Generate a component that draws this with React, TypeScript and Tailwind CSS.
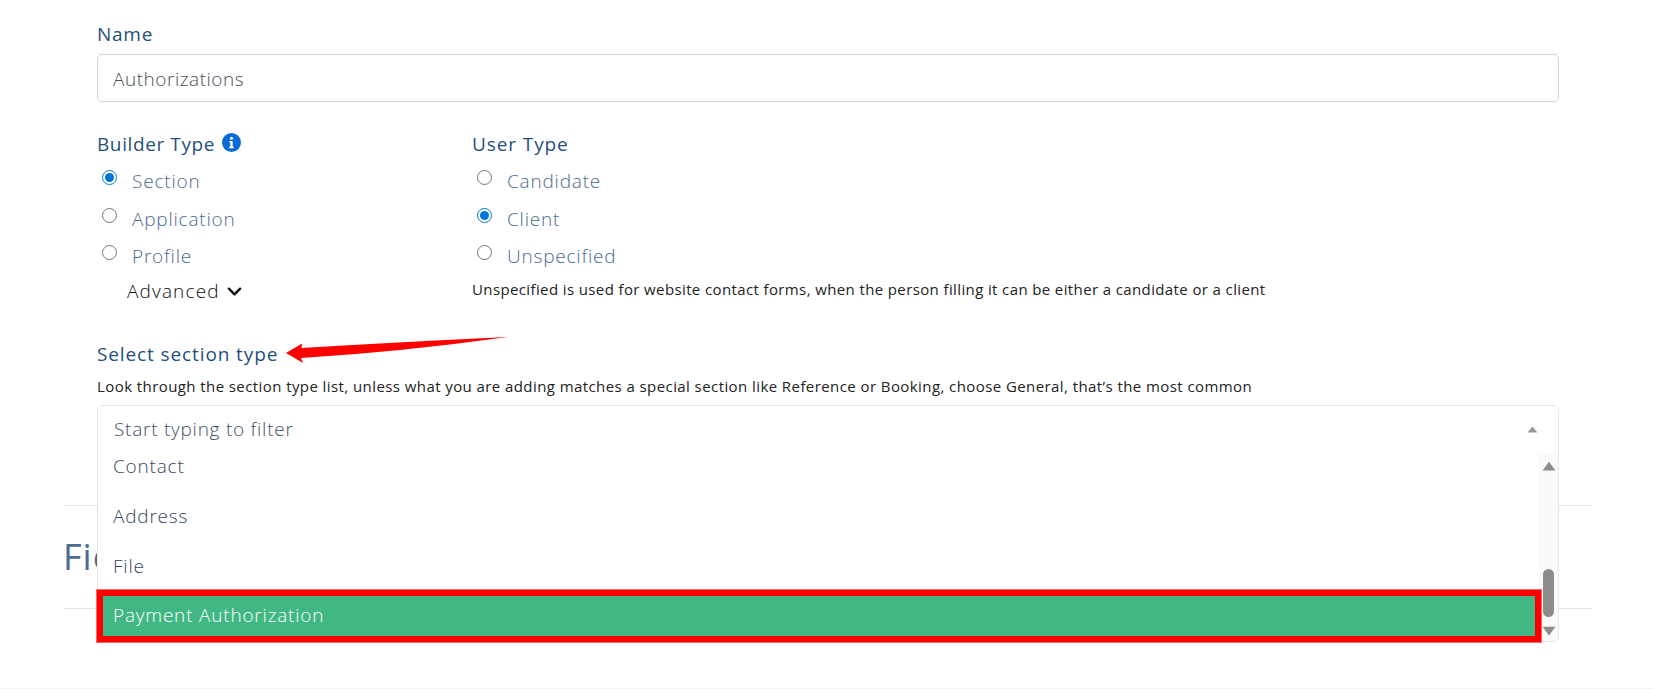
import React from "react";

const font = { fontFamily: '"Open Sans", "Liberation Sans", sans-serif' };

function RadioRow({ label, checked, name }: { label: string; checked?: boolean; name: string }) {
  return (
    <label className="flex h-[37.5px] items-center pl-[5px]">
      <input type="radio" name={name} defaultChecked={checked} className="-mt-[8px] h-[15px] w-[15px] accent-[#0075d9]" />
      <span className="-mt-[1px] ml-[15px] text-[19px] font-light leading-[24px] tracking-[0.8px] text-[#4a6b92]">{label}</span>
    </label>
  );
}

function Tri({ down, cls }: { down?: boolean; cls: string }) {
  return (
    <svg viewBox="0 0 12 8" preserveAspectRatio="none" className={cls}>
      <path d={down ? "M0.5 0.5 H11.5 L6 7.5 Z" : "M6 0.5 L11.5 7.5 H0.5 Z"} fill="currentColor" />
    </svg>
  );
}

export default function App() {
  return (
    <div style={font} className="relative h-[693px] w-full overflow-hidden bg-white pl-[97px] pr-[94px] pt-[22px]">
      <div className="text-[19px] font-medium leading-[24px] tracking-[0.75px] text-[#1f4f7c]">Name</div>
      <div className="mt-[8px] flex h-[48px] items-center rounded-[5px] border border-[#ced4da] px-[15px] pt-[2px] text-[19px] font-light tracking-[0.53px] text-[#4a4f55]">
        Authorizations
      </div>

      <div className="mt-[30px] flex">
        <div className="w-[375px]">
          <div className="flex h-[24px] items-center text-[19px] font-medium leading-[24px] tracking-[0.6px] text-[#1f4f7c]">
            Builder Type
            <svg viewBox="0 0 20 20" className="-mt-[3px] ml-[7px] h-[19px] w-[19px]">
              <circle cx="10" cy="10" r="10" fill="#0b6bd6" />
              <circle cx="10" cy="5.6" r="1.6" fill="#fff" />
              <path d="M7.8 8.4h3.4v6h1.2v1.6H7.6v-1.6h1.2v-4.4H7.8z" fill="#fff" />
            </svg>
          </div>
          <div className="mt-[7px]">
            <RadioRow name="builder" label="Section" checked />
            <RadioRow name="builder" label="Application" />
            <RadioRow name="builder" label="Profile" />
          </div>
          <div className="mt-[4px] flex h-[24px] items-center pl-[30px] text-[19px] font-light tracking-[1.15px] text-[#111]">
            Advanced
            <svg viewBox="0 0 16 16" className="ml-[7px] h-[15px] w-[15px]" fill="none" stroke="#111" strokeWidth="2.6" strokeLinecap="round" strokeLinejoin="round">
              <path d="M2 5 L8 11 L14 5" />
            </svg>
          </div>
        </div>
        <div className="flex-1">
          <div className="text-[19px] font-medium leading-[24px] tracking-[0.9px] text-[#1f4f7c]">User Type</div>
          <div className="mt-[7px]">
            <RadioRow name="user" label="Candidate" />
            <RadioRow name="user" label="Client" checked />
            <RadioRow name="user" label="Unspecified" />
          </div>
          <div className="mt-[4px] -translate-y-[1px] text-[15px] leading-[20px] tracking-[0.38px] text-[#222]">
            Unspecified is used for website contact forms, when the person filling it can be either a candidate or a client
          </div>
        </div>
      </div>

      <div className="mt-[38px] text-[19px] font-medium leading-[24px] tracking-[0.89px] text-[#1f4f7c]">Select section type</div>
      <div className="mt-[11px] -translate-y-[1px] text-[15px] leading-[20px] tracking-[0.42px] text-[#222]">
        Look through the section type list, unless what you are adding matches a special section like Reference or Booking, choose General, that’s the most common
      </div>

      <div className="relative mt-[8px]">
        <div className="flex h-[50px] items-center justify-between rounded-t-[5px] border border-[#e8e8e8] pl-[16px] pr-[20px] text-[19px] font-light tracking-[0.75px] text-[#3f4f66]">
          Start typing to filter
          <Tri cls="h-[7px] w-[11px] text-[#999]" />
        </div>
        <div className="absolute left-0 right-0 top-[49px] z-10 flex h-[188px] overflow-hidden rounded-b-[5px] border border-t-0 border-[#e8e8e8] bg-white">
          <div className="flex-1 overflow-hidden text-[19px] font-light tracking-[0.8px]">
            <div className="-mt-[12px]">
              <div className="flex h-[50px] items-center px-[15px] text-[#35465f]">Contact</div>
              <div className="flex h-[50px] items-center px-[15px] text-[#35465f]">Address</div>
              <div className="flex h-[49px] items-center px-[15px] text-[#35465f]">File</div>
              <div className="flex h-[50px] items-center bg-[#41b883] px-[15px] text-white">Payment Authorization</div>
            </div>
          </div>
          <div className="relative w-[19px] shrink-0 bg-[#fafafa] text-[#8c8c8c]">
            <Tri cls="absolute left-[3px] top-[7px] h-[10px] w-[14px]" />
            <div className="absolute left-[4px] top-[115px] h-[48px] w-[11px] rounded-full bg-[#8c8c8c]" />
            <Tri down cls="absolute bottom-[5px] left-[3px] h-[10px] w-[14px]" />
          </div>
        </div>
        <div className="absolute left-0 top-[185px] z-20 h-[52px] w-[1444px] border-[6px] border-[#ff0000] shadow-[0_0_0_1px_#ff6666]" />

        <div className="-mx-[33px] mt-[50px] border-t border-[#e6e6e6]">
          <div className="-ml-[1px] flex h-[102px] items-center text-[36px] tracking-[1px] text-[#4c6c90]">Fields</div>
        </div>
        <div className="-mx-[33px] border-t border-[#e6e6e6]" />
      </div>

      <div className="absolute bottom-[4px] left-0 right-0 border-t border-[#f3f3f3]" />

      <svg className="absolute left-[280px] top-[330px] z-30 h-[35px] w-[235px]" viewBox="0 0 235 35">
        <path d="M6 23 L22 13.5 L21.5 18 Q120 12 228 7 Q120 22 21 28 L23 33 Z" fill="#ff0000" />
      </svg>
    </div>
  );
}
